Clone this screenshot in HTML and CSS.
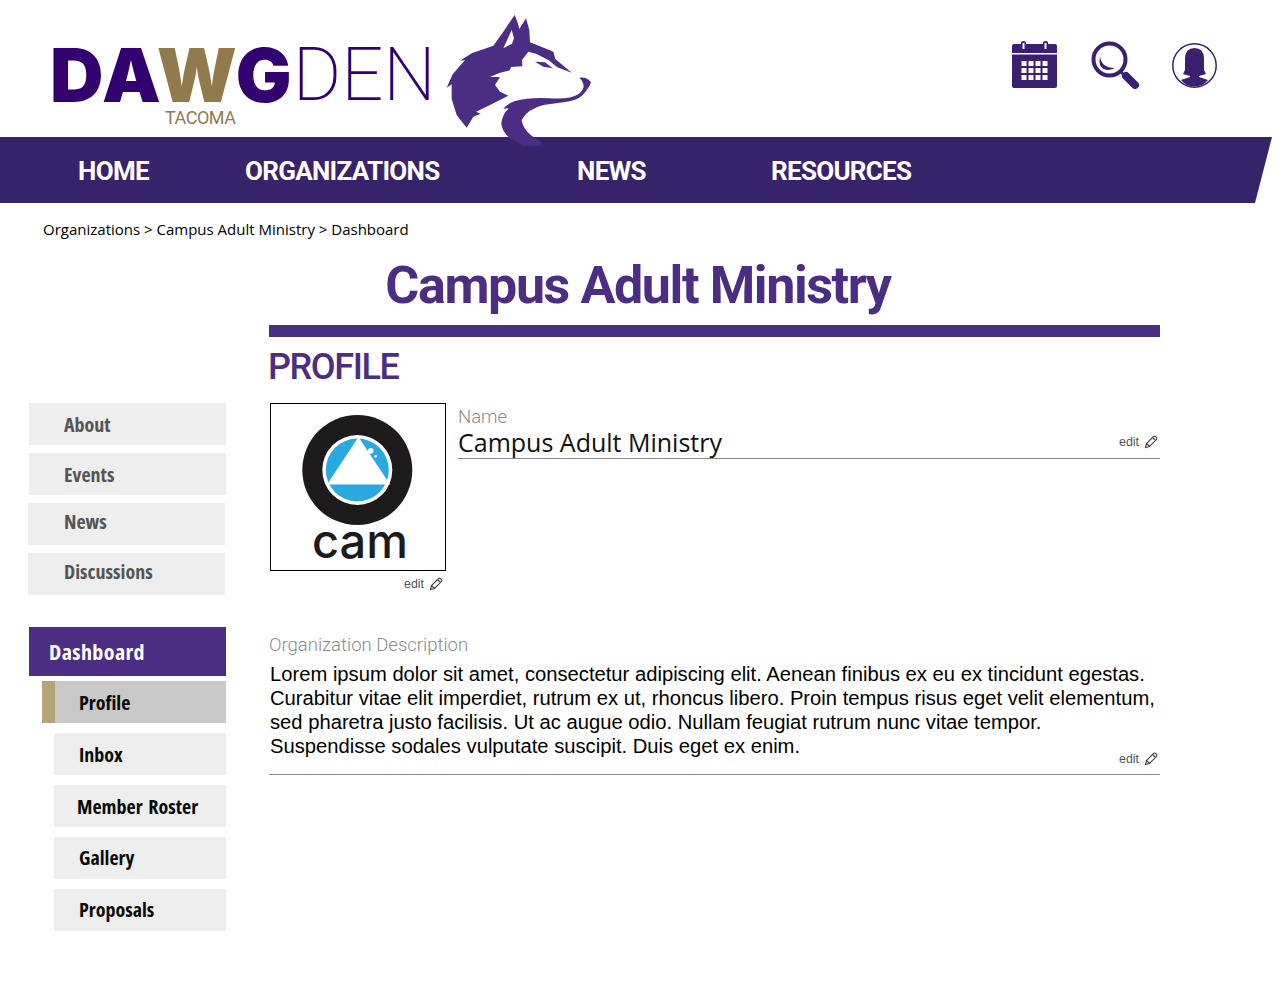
FILE: index.html
```html
<!DOCTYPE html>
<html lang="en">
<head>
<meta charset="utf-8">
<title>Campus Adult Ministry</title>
<link rel="stylesheet" href="styles.css">
</head>
<body>
<header class="masthead">
  <div class="logo">
    <div class="wordmark"><span class="dawg">DA<span class="gold">W</span>G</span><span class="den">DEN</span></div>
    <div class="tacoma">TACOMA</div>
  </div>
  <svg class="wolf" viewBox="0 0 480 450" aria-hidden="true">
    <path fill="#4b2e83" fill-rule="evenodd" d="M160 122L190 80L224 30L232 50L238 72L258 40L268 75L270 112L300 124L340 140L346 162L395 203L352 187L325 165L290 147L265 140L246 165L247 184L213 186L210 196L178 204L150 216L180 216L165 240L180 260L205 272L150 300L108 320L122 326L100 335L80 368L50 330L35 282L35 238L20 248L38 208L75 165L60 167L95 145ZM190 130L215 75L222 100L216 116Z"/>
    <path fill="#4b2e83" d="M285 170L315 172L338 190L310 185Z"/>
    <path fill="#4b2e83" d="M418 218Q440 214 453 232Q447 250 428 270Q410 288 370 292L310 300Q262 312 245 345Q248 372 275 392L305 412L300 422L250 423L210 400Q185 380 184 355Q186 330 206 310L190 311Q205 295 225 288Q270 276 330 280Q390 284 415 268Q445 245 418 218Z"/>
  </svg>
  <div class="tools">
    <svg class="tool-cal" viewBox="0 0 45 47" aria-hidden="true">
      <path fill="#3a206e" d="M2 3H9V1.500Q9 0 11.500 0T14 1.500V3H31V1.500Q31 0 33.500 0T36 1.500V3H43Q45 3 45 5V12H0V5Q0 3 2 3Z"/>
      <path fill="#fff" d="M10.500 2H12.500V8H10.500ZM32.500 2H34.500V8H32.500Z"/>
      <path fill="#3a206e" d="M0 13.500H45V45Q45 47 43 47H2Q0 47 0 45Z"/>
      <path fill="#fff" d="M9.500 20h5v5h-5zM16.500 20h5v5h-5zM23.500 20h5v5h-5zM30.500 20h5v5h-5zM9.500 27h5v5h-5zM16.500 27h5v5h-5zM23.500 27h5v5h-5zM30.500 27h5v5h-5zM9.500 34h5v5h-5zM16.500 34h5v5h-5zM23.500 34h5v5h-5zM30.500 34h5v5h-5z"/>
    </svg>
    <svg class="tool-search" viewBox="0 0 49 49" aria-hidden="true">
      <circle cx="18.500" cy="18.500" r="16" fill="none" stroke="#3a206e" stroke-width="4"/>
      <path fill="#3a206e" d="M9 15Q10 27 24 27Q13 32 9 24Q8 20 9 15Z"/>
      <path stroke="#3a206e" stroke-width="3" d="M29 30L33 34"/>
      <path stroke="#3a206e" stroke-width="8" stroke-linecap="round" d="M35 35L44 44"/>
    </svg>
    <svg class="tool-user" viewBox="0 0 45 45" aria-hidden="true">
      <circle cx="22.500" cy="22.500" r="21.700" fill="#fff" stroke="#3a206e" stroke-width="1.500"/>
      <path fill="#3a206e" d="M11 31L13 27V15Q13.500 5 22.500 5T32 15V27L34 31L27 33V34L36 37Q31 43.500 22.500 43.500T9 37L18 34V33Z"/>
    </svg>
  </div>
</header>

<nav class="mainnav">
  <a class="nav-home">HOME</a>
  <a class="nav-org">ORGANIZATIONS</a>
  <a class="nav-news">NEWS</a>
  <a class="nav-res">RESOURCES</a>
</nav>

<div class="crumbs">Organizations &gt; Campus Adult Ministry &gt; Dashboard</div>
<h1 class="org-title">Campus Adult Ministry</h1>
<div class="section-head">
  <div class="rule-bar"></div>
  <h2 class="section-title">PROFILE</h2>
</div>

<div class="columns">
  <aside class="sidebar">
    <ul class="menu">
      <li class="item muted">About</li>
      <li class="item muted">Events</li>
      <li class="item muted nudge">News</li>
      <li class="item muted nudge">Discussions</li>
    </ul>
    <div class="dash">Dashboard</div>
    <ul class="submenu">
      <li class="subitem current">Profile</li>
      <li class="subitem">Inbox</li>
      <li class="subitem tight">Member Roster</li>
      <li class="subitem raised">Gallery</li>
      <li class="subitem raised">Proposals</li>
    </ul>
  </aside>

  <main class="content">
    <div class="profile-row">
      <div class="avatar-col">
        <div class="avatar">
          <svg class="cam" viewBox="0 0 174 166" role="img" aria-label="cam logo">
            <circle cx="86.300" cy="66" r="55" fill="#1c1a1b"/>
            <circle cx="86.300" cy="66" r="35" fill="#fff"/>
            <circle cx="86.300" cy="66" r="31.500" fill="#29a9e0"/>
            <path fill="#fff" d="M87.500 33L56 80.500H119Z"/>
            <circle cx="99.700" cy="46.700" r="2.800" fill="#fff"/>
            <circle cx="104.700" cy="52.300" r="1.300" fill="#fff"/>
            <text class="cam-word" x="41" y="154" textLength="96" lengthAdjust="spacingAndGlyphs">cam</text>
          </svg>
        </div>
        <div class="edit edit-photo">edit <svg class="pencil" viewBox="0 0 14 14" aria-hidden="true"><path d="M1.500 12.500L2.500 8.500L9.500 1.500Q10.500 .8 11.500 1.500L12.500 2.500Q13.200 3.500 12.500 4.500L5.500 11.500ZM2.500 8.500L5.500 11.500M8.500 2.500L11.500 5.500"/></svg></div>
      </div>
      <div class="field name-field">
        <div class="label">Name</div>
        <div class="name-line">
          <span class="name-value">Campus Adult Ministry</span>
          <span class="edit">edit <svg class="pencil" viewBox="0 0 14 14" aria-hidden="true"><path d="M1.500 12.500L2.500 8.500L9.500 1.500Q10.500 .8 11.500 1.500L12.500 2.500Q13.200 3.500 12.500 4.500L5.500 11.500ZM2.500 8.500L5.500 11.500M8.500 2.500L11.500 5.500"/></svg></span>
        </div>
      </div>
    </div>

    <section class="description">
      <div class="label">Organization Description</div>
      <p class="lorem">Lorem ipsum dolor sit amet, consectetur adipiscing elit. Aenean finibus ex eu ex tincidunt egestas.<br>Curabitur vitae elit imperdiet, rutrum ex ut, rhoncus libero. Proin tempus risus eget velit elementum,<br>sed pharetra justo facilisis. Ut ac augue odio. Nullam feugiat rutrum nunc vitae tempor.<br>Suspendisse sodales vulputate suscipit. Duis eget ex enim.</p>
      <div class="edit edit-desc">edit <svg class="pencil" viewBox="0 0 14 14" aria-hidden="true"><path d="M1.500 12.500L2.500 8.500L9.500 1.500Q10.500 .8 11.500 1.500L12.500 2.500Q13.200 3.500 12.500 4.500L5.500 11.500ZM2.500 8.500L5.500 11.500M8.500 2.500L11.500 5.500"/></svg></div>
    </section>
  </main>
</div>
</body>
</html>
```

FILE: styles.css
```css
* { box-sizing: border-box; }
html, body { margin: 0; padding: 0; }
body { background: #fff; color: #000; font-family: "Open Sans", sans-serif; height: 1000px; overflow: hidden; }
ul { list-style: none; margin: 0; padding: 0; }
h1, h2, p { margin: 0; }

.masthead { position: relative; height: 137px; }
.logo { position: absolute; left: 50px; top: 39px; }
.wordmark { display: flex; height: 72px; line-height: 72px; font-size: 74px; white-space: nowrap; }
.dawg { font-family: Inter, sans-serif; font-weight: 900; color: #33006f; letter-spacing: 2.200px; }
.gold { color: #917b4c; }
.den { font-family: Roboto, sans-serif; font-weight: 200; color: #33006f; margin-left: -1px; }
.tacoma { font-family: Roboto, sans-serif; font-size: 18px; line-height: 18px; color: #917b4c; margin-left: 115px; letter-spacing: -.5px; margin-top: -2px; }
.wolf { position: absolute; left: 440px; top: 5px; width: 160px; height: 150px; z-index: 2; }
.tools svg { position: absolute; display: block; }
.tool-cal { left: 1012px; top: 41px; width: 45px; height: 47px; }
.tool-search { left: 1091px; top: 41px; width: 49px; height: 49px; }
.tool-user { left: 1172px; top: 43px; width: 45px; height: 45px; }

.mainnav { position: relative; height: 66px; width: 1272px; background: #37236a; clip-path: polygon(0 0, 100% 0, 1255px 100%, 0 100%); font-family: Roboto, sans-serif; font-weight: 700; font-size: 26px; line-height: 69px; letter-spacing: -.7px; color: #fff; }
.mainnav a { position: absolute; top: 0; }
.nav-home { left: 78px; }
.nav-org { left: 245px; }
.nav-news { left: 577px; }
.nav-res { left: 771px; }

.crumbs { padding: 16px 0 0 43px; font-size: 15px; line-height: 20px; height: 36px; }
.org-title { font-family: Roboto, sans-serif; font-weight: 700; font-size: 52px; line-height: 70px; height: 86px; padding-top: 12px; text-align: center; color: #4b2e83; width: 1276px; letter-spacing: -1.400px; }
.section-head { margin-left: 269px; width: 891px; }
.rule-bar { height: 12px; background: #4b2e83; }
.section-title { font-family: Roboto, sans-serif; font-weight: 500; font-size: 36px; line-height: 60px; height: 66px; margin-left: -1px; color: #4b2e83; letter-spacing: -1.400px; }

.columns { display: flex; margin-left: 29px; }
.sidebar { width: 197px; flex: none; }
.menu { display: flex; flex-direction: column; }
.item { height: 42px; margin-bottom: 8px; background: #eee; padding-left: 35px; font-stretch: 75%; font-weight: 700; font-size: 20px; line-height: 44px; color: #555; }
.nudge { transform: translateX(-1px); padding-left: 36px; line-height: 38px; }
.dash { margin-top: 24px; height: 49px; background: #4b2e83; color: #fff; padding-left: 20px; font-stretch: 75%; font-weight: 700; font-size: 22px; line-height: 49px; letter-spacing: .4px; }
.submenu { margin-top: 5px; display: flex; flex-direction: column; gap: 10px; }
.subitem { margin-left: 25px; height: 42px; background: #eee; padding-left: 25px; font-stretch: 75%; font-weight: 700; font-size: 20px; line-height: 44px; color: #0b0b0b; }
.current { margin-left: 13px; background: #c9c9c9; border-left: 13px solid #b7a57a; padding-left: 24px; }
.tight { padding-left: 23px; word-spacing: 2px; }
.raised { line-height: 42px; }

.content { width: 891px; margin-left: 43px; }
.profile-row { display: flex; height: 228px; }
.avatar-col { width: 189px; flex: none; padding-left: 1px; }
.avatar { width: 176px; height: 168px; border: 1px solid #000; }
.cam { display: block; width: 174px; height: 166px; }
.cam-word { font-family: Inter, sans-serif; font-size: 48px; font-weight: 500; fill: #1c1a1b; }
.edit { font-family: "Liberation Sans", sans-serif; font-size: 12.400px; line-height: 16px; color: #555; display: flex; align-items: center; gap: 5px; }
.pencil { width: 14px; height: 14px; fill: none; stroke: #444; stroke-width: 1.100; flex: none; }
.edit-photo { justify-content: flex-end; width: 173px; margin-top: 5px; }
.name-field { flex: 1; }
.label { font-family: Roboto, sans-serif; font-weight: 300; font-size: 18.500px; line-height: 26px; padding-top: 1px; height: 26px; color: #8c8c8c; }
.name-line { display: flex; justify-content: space-between; align-items: flex-start; height: 31px; margin-top: -1px; border-bottom: 1px solid #888; padding: 0 2px 0 0; }
.name-value { font-size: 25px; line-height: 28px; color: #111; }
.name-line .edit { margin-top: 6px; }
.description { position: relative; height: 144px; border-bottom: 1px solid #888; }
.lorem { font-family: "Liberation Sans", sans-serif; font-size: 20.220px; line-height: 24px; padding-left: 1px; margin-top: 5px; white-space: nowrap; }
.edit-desc { position: absolute; right: 2px; bottom: 7px; }
```
